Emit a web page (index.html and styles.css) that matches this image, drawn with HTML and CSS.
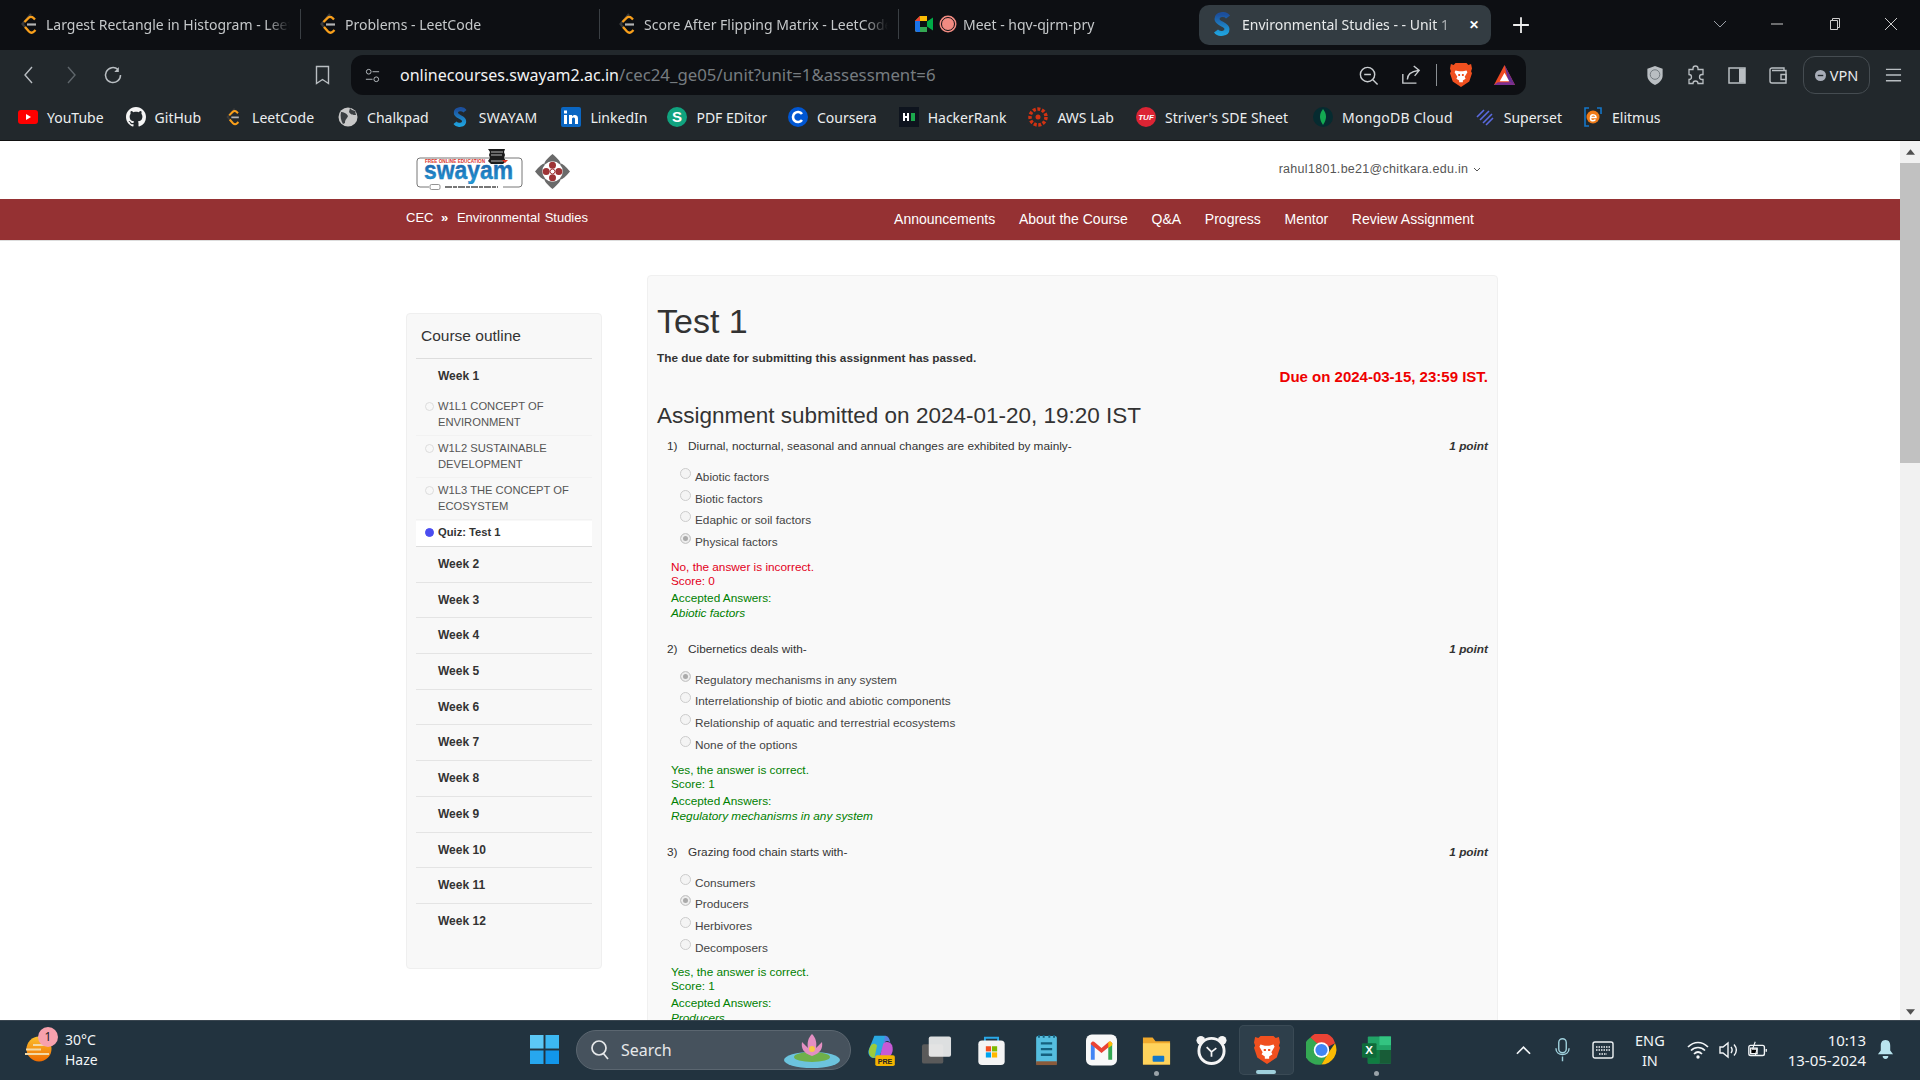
FILE: index.html
```html
<!DOCTYPE html>
<html lang="en">
<head>
<meta charset="utf-8">
<title>Environmental Studies - - Unit 1</title>
<link rel="stylesheet" href="styles.css">
</head>
<body>
<svg class="defs" width="0" height="0">
  <linearGradient id="swg" x1="0" y1="0" x2="0" y2="1"><stop offset="0" stop-color="#1c4f9c"/><stop offset="1" stop-color="#1fa0dc"/></linearGradient>
  <linearGradient id="sung" x1="0" y1="0" x2="0" y2="1"><stop offset="0" stop-color="#fbc02d"/><stop offset="1" stop-color="#ef6c00"/></linearGradient>
  <symbol id="lc" viewBox="0 0 20 24"><path d="M12 2 3.500 12l3 3.500" stroke="#3a3a3a" stroke-width="2.200" fill="none"/><path d="M6 15l4 4.500c1.500 1.500 3.500 1.500 5 0l1.500-1.500" stroke="#f89f1b" stroke-width="2.400" fill="none"/><path d="M5.500 10l4-4c1.500-1.500 3.500-1.500 5 0l1.500 1.500" stroke="#f89f1b" stroke-width="2.400" fill="none"/><path d="M8 12.500h9" stroke="#b3b3b3" stroke-width="2.200"/></symbol>
  <symbol id="sw" viewBox="0 0 16 24"><path d="M14 5C11 1 3 2 3 7c0 5 10 5 10 10 0 5-8 6-11 2" fill="none" stroke="url(#swg)" stroke-width="5"/></symbol>
  <symbol id="brave" viewBox="0 0 24 28"><path d="M6 1h12l2 2 3-1 1 5-1 3 1 2-3 9-9 6-9-6-3-9 1-2-1-3 1-5 3 1z" fill="#f0501f"/><path d="M6 9l4 1h4l4-1 1 2-3 5 1 2-3 2v2h-4v-2l-3-2 1-2-3-5z" fill="#fff"/><path d="M9 13h2v2H9zM13 13h2v2h-2z" fill="#f0501f"/></symbol>
</svg>

<header class="tabstrip">
  <div class="tab"><svg class="fav"><use href="#lc"/></svg><span class="tab-title">Largest Rectangle in Histogram - LeetCode</span></div>
  <div class="tab"><svg class="fav"><use href="#lc"/></svg><span class="tab-title">Problems - LeetCode</span></div>
  <div class="tab"><svg class="fav"><use href="#lc"/></svg><span class="tab-title">Score After Flipping Matrix - LeetCode</span></div>
  <div class="tab tab-meet">
    <svg class="fav" viewBox="0 0 20 20"><path d="M1 7l5-5h7v16H3a2 2 0 0 1-2-2z" fill="#fbbc04"/><path d="M1 7h5v6H1z" fill="#1a73e8"/><path d="M6 2h7v5H6z" fill="#fbbc04"/><path d="M1 7l5-5v5z" fill="#ea4335"/><path d="M1 13h5v5H3a2 2 0 0 1-2-2z" fill="#1a73e8"/><path d="M6 13h7v5H6z" fill="#34a853"/><path d="M6 7h7v6H6z" fill="#0d0f13"/><path d="M13 7.500l6-4v13l-6-4z" fill="#00ac47"/></svg>
    <span class="rec"></span>
    <span class="tab-title">Meet - hqv-qjrm-pry</span>
  </div>
  <div class="tab tab-active"><svg class="fav"><use href="#sw"/></svg><span class="tab-title">Environmental Studies - - Unit 1</span><span class="tab-x">✕</span></div>
  <svg class="newtab" viewBox="0 0 16 16"><path d="M8 1v14M1 8h14" stroke="#eee" stroke-width="1.600"/></svg>
  <div class="winctl">
    <svg viewBox="0 0 14 14"><path d="M1 4l6 6 6-6" stroke="#9aa0a6" fill="none"/></svg>
    <svg viewBox="0 0 14 14"><path d="M1 7h12" stroke="#ccc"/></svg>
    <svg viewBox="0 0 14 14"><path d="M3.500 3.500h7v9h-7zM5.500 3.500v-2h7v9h-2" stroke="#ccc" fill="none"/></svg>
    <svg viewBox="0 0 14 14"><path d="M1 1l12 12M13 1L1 13" stroke="#ccc"/></svg>
  </div>
</header>

<nav class="toolbar">
  <div class="navbtns">
    <svg viewBox="0 0 20 20"><path d="M13 2L6 10l7 8" stroke="#b9bec2" stroke-width="1.400" fill="none"/></svg>
    <svg viewBox="0 0 20 20"><path d="M7 2l7 8-7 8" stroke="#5f666b" stroke-width="1.400" fill="none"/></svg>
    <svg viewBox="0 0 20 20"><path d="M15 4.500A7.500 7.500 0 1 0 17.500 10" stroke="#b9bec2" stroke-width="1.500" fill="none"/><path d="M15.800 2v5h-4.500z" fill="#b9bec2"/></svg>
  </div>
  <svg class="bm" viewBox="0 0 16 20"><path d="M2 1.500h12v17l-6-4-6 4z" stroke="#b9bec2" stroke-width="1.400" fill="none"/></svg>
  <div class="urlbar">
    <svg class="tune" viewBox="0 0 18 18"><circle cx="5" cy="5" r="2.500" stroke="#b9bec2" fill="none"/><path d="M9 5h7M2 13h7" stroke="#b9bec2"/><circle cx="13" cy="13" r="2.500" stroke="#b9bec2" fill="none"/></svg>
    <span class="url"><span class="host">onlinecourses.swayam2.ac.in</span>/cec24_ge05/unit?unit=1&amp;assessment=6</span>
    <svg class="lens" viewBox="0 0 22 22"><circle cx="10" cy="10" r="7.500" stroke="#c9cdd0" stroke-width="1.500" fill="none"/><path d="M6.500 10h7M15.500 15.500l5 5" stroke="#c9cdd0" stroke-width="1.500"/></svg>
    <svg class="share" viewBox="0 0 22 22"><path d="M2 10v10h15M7 16c0-6 4-9 12-10M14 1l6 5-5 6" stroke="#c9cdd0" stroke-width="1.500" fill="none"/></svg>
    <span class="urlsep"></span>
    <svg class="brv"><use href="#brave"/></svg>
    <svg class="tri" viewBox="0 0 24 24"><path d="M12 1l11 21H1z" fill="#ef4a23"/><path d="M12 1l11 21-7-4z" fill="#662d91"/><path d="M1 22l4-3h14l4 3z" fill="#7b2f91"/><path d="M12 9l5 9H7z" fill="#fff"/></svg>
  </div>
  <div class="tools">
    <svg viewBox="0 0 20 22"><path d="M10 1l8 3v7c0 5-4 8-8 10-4-2-8-5-8-10V4z" fill="#b9bec2"/><circle cx="10" cy="10" r="5" stroke="#6f777c" fill="none"/></svg>
    <svg viewBox="0 0 20 20"><path d="M7 3a2.500 2.500 0 0 1 5 0v1h5v5h-1a2.500 2.500 0 0 0 0 5h1v4h-5a2.500 2.500 0 0 0-5 0H3v-4a2.500 2.500 0 0 0 0-5V4h4z" stroke="#b9bec2" stroke-width="1.300" fill="none"/></svg>
    <svg viewBox="0 0 20 20"><path d="M2 2.500h16v15H2z" stroke="#b9bec2" stroke-width="1.500" fill="none"/><path d="M12 3h6v14h-6z" fill="#b9bec2"/></svg>
    <svg viewBox="0 0 20 20"><path d="M16 5V2.500H4A2 2 0 0 0 2 4.500v11a2 2 0 0 0 2 2h14V5H4" stroke="#b9bec2" stroke-width="1.400" fill="none"/><path d="M13 9h5v5h-5z" stroke="#b9bec2" stroke-width="1.400" fill="none"/></svg>
  </div>
  <div class="vpn"><svg class="vpn-dot" viewBox="0 0 12 12"><circle cx="6" cy="6" r="6" fill="#a8adb8"/><path d="M3 6h6" stroke="#22282c" stroke-width="1.500"/></svg>VPN</div>
  <svg class="menu" viewBox="0 0 18 16"><path d="M1 2h16M1 8h16M1 14h16" stroke="#b9bec2" stroke-width="1.500"/></svg>
</nav>

<div class="bookmarks">
  <span class="bk b1"><svg viewBox="0 0 20 20"><rect y="3" width="20" height="14" rx="3" fill="#f00"/><path d="M8 7l5 3-5 3z" fill="#fff"/></svg>YouTube</span>
  <span class="bk b2"><svg viewBox="0 0 16 16"><path fill="#f5f5f5" d="M8 0C3.580 0 0 3.580 0 8c0 3.540 2.290 6.530 5.470 7.590.4.070.55-.17.55-.38 0-.19-.01-.82-.01-1.490-2.010.37-2.530-.49-2.690-.94-.09-.23-.48-.94-.82-1.130-.28-.15-.68-.52-.01-.53.63-.01 1.080.58 1.230.82.72 1.210 1.870.87 2.330.66.07-.52.28-.87.51-1.070-1.780-.2-3.640-.89-3.640-3.950 0-.87.31-1.590.82-2.150-.08-.2-.36-1.020.08-2.120 0 0 .67-.21 2.200.82.64-.18 1.320-.27 2-.27s1.360.09 2 .27c1.530-1.040 2.200-.82 2.200-.82.44 1.100.16 1.920.08 2.120.51.56.82 1.270.82 2.150 0 3.070-1.870 3.750-3.650 3.950.29.25.54.73.54 1.480 0 1.070-.01 1.930-.01 2.200 0 .21.15.46.55.38A8.010 8.010 0 0 0 16 8c0-4.420-3.580-8-8-8z"/></svg>GitHub</span>
  <span class="bk b3"><svg viewBox="0 0 20 24"><use href="#lc"/></svg>LeetCode</span>
  <span class="bk b4"><svg viewBox="0 0 20 20"><circle cx="10" cy="10" r="9.500" fill="#c8c8c8"/><path d="M3 5c3 0 5 1 7 4-1 3-3 3-3 7l-2 1C3 14 2 9 3 5zM12 1c1 2 3 2 5 3l1 4c-3 0-5 0-7-3z" fill="#3b3f42"/></svg>Chalkpad</span>
  <span class="bk b5"><svg viewBox="0 0 16 24"><use href="#sw"/></svg>SWAYAM</span>
  <span class="bk b6"><svg viewBox="0 0 20 20"><rect width="20" height="20" rx="2" fill="#0a66c2"/><path d="M3 8h3v9H3zM3 3.500h3v3H3zM8 8h3v1.500c1-2 6-2.500 6 2V17h-3v-5c0-2-3-2-3 0v5H8z" fill="#fff"/></svg>LinkedIn</span>
  <span class="bk b7"><svg viewBox="0 0 20 20"><circle cx="10" cy="10" r="10" fill="#10a37f"/><text x="10" y="15" class="ico-t" fill="#fff">S</text></svg>PDF EDitor</span>
  <span class="bk b8"><svg viewBox="0 0 20 20"><circle cx="10" cy="10" r="10" fill="#0056d2"/><path d="M14 7a5 5 0 1 0 0 6" stroke="#fff" stroke-width="2.600" fill="none"/></svg>Coursera</span>
  <span class="bk b9"><svg viewBox="0 0 20 20"><rect width="20" height="20" fill="#0e141e"/><path d="M4 6h2v8H4zM8 6h2v8H8zM5 9h4v2H5z" fill="#fff"/><path d="M12 6h4v8h-4z" fill="#1ba94c"/></svg>HackerRank</span>
  <span class="bk b10"><svg viewBox="0 0 20 20"><circle cx="10" cy="10" r="8" stroke="#d13212" stroke-width="3.500" stroke-dasharray="3 1.600" fill="none"/><circle cx="10" cy="10" r="2.500" fill="#d13212"/></svg>AWS Lab</span>
  <span class="bk b11"><svg viewBox="0 0 20 20"><circle cx="10" cy="10" r="10" fill="#dc2434"/><text x="10" y="13" class="ico-s" fill="#fff">TUF</text></svg>Striver's SDE Sheet</span>
  <span class="bk b12"><svg viewBox="0 0 20 20"><circle cx="10" cy="10" r="10" fill="#062b30"/><path d="M10 2c4 5 4 10 0 16-4-6-4-11 0-16z" fill="#13aa52"/></svg>MongoDB Cloud</span>
  <span class="bk b13"><svg viewBox="0 0 20 20"><path d="M2 10l7-7M5 13l9-9M8 16l9-9M11 18l7-7" stroke="#5a6ae0" stroke-width="1.600" fill="none"/></svg>Superset</span>
  <span class="bk b14"><svg viewBox="0 0 20 20"><path d="M6 1H2v18h4M14 1h4v6" stroke="#1576c8" stroke-width="1.600" fill="none"/><circle cx="10" cy="10" r="6.500" fill="#ef7b18"/><path d="M7 10.500h6c0-3-5-4-5.500 0s3 4 5 2" stroke="#fff" stroke-width="1.500" fill="none"/></svg>Elitmus</span>
</div>

<div class="viewport">
  <div class="page">
    <div class="site-head">
      <div class="head-inner">
        <svg class="logo" viewBox="0 0 108 44">
          <rect x="2" y="10" width="105" height="29" rx="3" fill="#fff" stroke="#777"/>
          <text x="10" y="15" class="logo-free" textLength="60" lengthAdjust="spacingAndGlyphs">FREE ONLINE EDUCATION</text>
          <text x="9" y="31" class="logo-main" textLength="89" lengthAdjust="spacingAndGlyphs">swayam</text>
          <path d="M73 1h17l-1 3 1 3-1 3 2 3-3 3H76l-3-3 2-3-1-3 1-3z" fill="#1b1b1b"/>
          <path d="M76 4h12M76 7h11M76 13h12" stroke="#ddd" stroke-width=".8"/>
          <path d="M87 12h6l-3 3z" fill="#d32"/>
          <rect x="14" y="36" width="74" height="6" fill="#fff"/>
          <rect x="15" y="36.500" width="10" height="5" rx="1.500" fill="#fff" stroke="#777" stroke-width=".8"/>
          <path d="M30 39h53" stroke="#777" stroke-width="2" stroke-dasharray="7 1 4 1"/>
        </svg>
        <svg class="emblem" viewBox="0 0 36 36">
          <path d="M18 0C24 5 27 9 26 10C27 9 31 12 36 18C31 24 27 27 26 26C27 27 24 31 18 36C12 31 9 27 10 26C9 27 5 24 0 18C5 12 9 9 10 10C9 9 12 5 18 0Z" fill="#6a6a6a"/>
          <circle cx="18" cy="18" r="10.500" fill="#fff"/>
          <circle cx="18" cy="11.500" r="3.600" fill="#9e3436"/><circle cx="18" cy="24.500" r="3.600" fill="#9e3436"/><circle cx="11.500" cy="18" r="3.600" fill="#9e3436"/><circle cx="24.500" cy="18" r="3.600" fill="#9e3436"/>
          <circle cx="18" cy="18" r="2.500" fill="#fff" stroke="#9e3436"/>
        </svg>
        <div class="user">rahul1801.be21@chitkara.edu.in <svg class="caret" viewBox="0 0 8 6"><path d="M1 1l3 3 3-3" stroke="#555" fill="none"/></svg></div>
      </div>
    </div>
    <div class="redbar">
      <div class="crumbs">CEC <span class="raquo">»</span> <span class="crumb2">Environmental Studies</span></div>
      <div class="menu-links">
        <span>Announcements</span><span>About the Course</span><span>Q&amp;A</span><span>Progress</span><span>Mentor</span><span>Review Assignment</span>
      </div>
    </div>
    <div class="content">
      <aside class="outline">
        <h3 class="outline-title">Course outline</h3>
        <div class="wk wk1">Week 1</div>
        <div class="ls"><span class="dot"></span>W1L1 CONCEPT OF ENVIRONMENT</div>
        <div class="ls"><span class="dot"></span>W1L2 SUSTAINABLE DEVELOPMENT</div>
        <div class="ls"><span class="dot"></span>W1L3 THE CONCEPT OF ECOSYSTEM</div>
        <div class="quiz"><span class="dot dot-on"></span>Quiz: Test 1</div>
        <div class="wk">Week 2</div>
        <div class="wk">Week 3</div>
        <div class="wk">Week 4</div>
        <div class="wk">Week 5</div>
        <div class="wk">Week 6</div>
        <div class="wk">Week 7</div>
        <div class="wk">Week 8</div>
        <div class="wk">Week 9</div>
        <div class="wk">Week 10</div>
        <div class="wk">Week 11</div>
        <div class="wk wk-last">Week 12</div>
      </aside>
      <main class="card">
        <h1 class="title">Test 1</h1>
        <p class="passed">The due date for submitting this assignment has passed.</p>
        <p class="due">Due on 2024-03-15, 23:59 IST.</p>
        <h2 class="submitted">Assignment submitted on 2024-01-20, 19:20 IST</h2>

        <section class="q">
          <div class="q-head"><span class="q-n">1)</span><span class="q-t">Diurnal, nocturnal, seasonal and annual changes are exhibited by mainly-</span><span class="pt">1 point</span></div>
          <div class="opt"><span class="radio"></span>Abiotic factors</div>
          <div class="opt"><span class="radio"></span>Biotic factors</div>
          <div class="opt"><span class="radio"></span>Edaphic or soil factors</div>
          <div class="opt"><span class="radio radio-on"></span>Physical factors</div>
          <div class="fb bad">No, the answer is incorrect.<br>Score: 0</div>
          <div class="acc">Accepted Answers:<br><em>Abiotic factors</em></div>
        </section>

        <section class="q">
          <div class="q-head"><span class="q-n">2)</span><span class="q-t">Cibernetics deals with-</span><span class="pt">1 point</span></div>
          <div class="opt"><span class="radio radio-on"></span>Regulatory mechanisms in any system</div>
          <div class="opt"><span class="radio"></span>Interrelationship of biotic and abiotic components</div>
          <div class="opt"><span class="radio"></span>Relationship of aquatic and terrestrial ecosystems</div>
          <div class="opt"><span class="radio"></span>None of the options</div>
          <div class="fb good">Yes, the answer is correct.<br>Score: 1</div>
          <div class="acc">Accepted Answers:<br><em>Regulatory mechanisms in any system</em></div>
        </section>

        <section class="q">
          <div class="q-head"><span class="q-n">3)</span><span class="q-t">Grazing food chain starts with-</span><span class="pt">1 point</span></div>
          <div class="opt"><span class="radio"></span>Consumers</div>
          <div class="opt"><span class="radio radio-on"></span>Producers</div>
          <div class="opt"><span class="radio"></span>Herbivores</div>
          <div class="opt"><span class="radio"></span>Decomposers</div>
          <div class="fb good">Yes, the answer is correct.<br>Score: 1</div>
          <div class="acc">Accepted Answers:<br><em>Producers</em></div>
        </section>
      </main>
    </div>
  </div>
  <div class="scrollbar">
    <svg class="sb-arrow" viewBox="0 0 10 6"><path d="M5 0l5 6H0z" fill="#505050"/></svg>
    <div class="sb-track"><div class="sb-thumb"></div></div>
    <svg class="sb-arrow" viewBox="0 0 10 6"><path d="M5 6L0 0h10z" fill="#505050"/></svg>
  </div>
</div>

<footer class="taskbar">
  <div class="weather">
    <svg class="sun" viewBox="0 0 30 36"><circle cx="15" cy="17" r="12.500" fill="url(#sung)"/><path d="M9 13h17M2 17.500h15M1 22h24" stroke="#f3d9a6" stroke-width="2"/></svg>
    <span class="badge">1</span>
    <div class="wtxt"><span>30°C</span><span>Haze</span></div>
  </div>
  <div class="center-icons">
    <svg class="win" viewBox="0 0 30 30"><path d="M0 0h14v14H0z" fill="#5cc8f5"/><path d="M16 0h14v14H16z" fill="#3cb8f2"/><path d="M0 16h14v14H0z" fill="#27a7ee"/><path d="M16 16h14v14H16z" fill="#1296ea"/></svg>
    <div class="search">
      <svg class="s-lens" viewBox="0 0 20 22"><circle cx="9" cy="9" r="7" stroke="#e6e8ea" stroke-width="1.700" fill="none"/><path d="M13 14l5 6" stroke="#e6e8ea" stroke-width="1.700"/></svg>
      <span>Search</span>
      <svg class="lotus" viewBox="0 0 60 36"><ellipse cx="30" cy="28" rx="28" ry="8" fill="#6cc3dd"/><ellipse cx="30" cy="25" rx="18" ry="5" fill="#6fb04a"/><path d="M30 2c4 4 5 9 4 14l6-6c1 6-1 11-10 14-9-3-11-8-10-14l6 6c-1-5 0-10 4-14z" fill="#e48fc2"/><circle cx="30" cy="17" r="3" fill="#f6c945"/></svg>
    </div>
    <div class="tb-apps">
      <span class="app"><svg viewBox="0 0 32 36"><path d="M8 2h11c3 0 2 6 0 10l-6 15H7c-5 0-7-6-5-10z" fill="#2aa8e0"/><path d="M3 15c2-5 6-5 8-2l-3 14c-5 0-8-6-5-12z" fill="#9ccc3c"/><path d="M19 2c5 0 6 3 7 8-2-3-6-3-8 1l1-4c1-3 1-5 0-5z" fill="#5b7fe0"/><path d="M18 11c2-3 8-3 10 2 2 6-1 13-5 13h-9z" fill="#c65ad6"/><rect x="9" y="24" width="22" height="12" rx="2" fill="#f4b400"/><text x="20" y="33.500" class="pre">PRE</text></svg></span>
      <span class="app"><svg viewBox="0 0 32 32"><rect x="1" y="10" width="22" height="20" rx="2" fill="#5a5a5a"/><rect x="8" y="2" width="23" height="21" rx="2" fill="#f2f2f2" fill-opacity=".9"/></svg></span>
      <span class="app"><svg viewBox="0 0 30 34"><path d="M8 9V4h14v5" stroke="#29a8e8" stroke-width="2" fill="none"/><rect x="1" y="7" width="28" height="26" rx="4" fill="#f4f4f4"/><rect x="9" y="13" width="5.500" height="5.500" fill="#f25022"/><rect x="15.500" y="13" width="5.500" height="5.500" fill="#7fba00"/><rect x="9" y="19.500" width="5.500" height="5.500" fill="#00a4ef"/><rect x="15.500" y="19.500" width="5.500" height="5.500" fill="#ffb900"/></svg></span>
      <span class="app"><svg viewBox="0 0 26 34"><rect x="2" y="2" width="22" height="30" rx="2" fill="#55bedf"/><rect x="2" y="29" width="22" height="4" fill="#8a5a3a"/><path d="M7 10h12M7 16h12M7 22h12" stroke="#15607e" stroke-width="2.500"/><path d="M5 1v3M10 1v3M16 1v3M21 1v3" stroke="#15607e" stroke-width="2"/></svg></span>
      <span class="app"><svg viewBox="0 0 32 32"><rect width="32" height="32" rx="6" fill="#f8f8f8"/><path d="M5 26V9l4 3v14z" fill="#4285f4"/><path d="M27 26V9l-4 3v14z" fill="#34a853"/><path d="M5 9c1-2 3-2 4-1l7 6 7-6c1-1 3-1 4 1v1l-11 9L5 10z" fill="#ea4335"/><path d="M23 8c1-1 3-1 4 1v2l-4 3z" fill="#fbbc04"/></svg></span>
      <span class="app app-dot"><svg viewBox="0 0 32 32"><path d="M2 3h10l3 4h15v24H2z" fill="#f0a92c"/><path d="M2 9h28v22H2z" fill="#ffd35c"/><rect x="12" y="22" width="12" height="6" rx="1" fill="#1377c9"/></svg></span>
      <span class="app"><svg viewBox="0 0 32 32"><circle cx="5" cy="6" r="4.500" fill="#f4f4f4"/><circle cx="27" cy="6" r="4.500" fill="#f4f4f4"/><circle cx="16" cy="17" r="13" fill="#22333f" stroke="#f4f4f4" stroke-width="3"/><path d="M16 18l-5-5M16 18l5-4M16 18v5" stroke="#f4f4f4" stroke-width="1.800"/></svg></span>
      <span class="app app-active"><svg class="abrv"><use href="#brave"/></svg></span>
      <span class="app"><svg viewBox="0 0 32 32"><path d="M16 16L4.500 3A15 15 0 0 1 30 9z" fill="#ea4335"/><path d="M4.500 3A15.500 15.500 0 0 0 16 31l7-12z" fill="#34a853"/><path d="M30 9a15.500 15.500 0 0 1-14 22l7-12z" fill="#fbbc04"/><circle cx="16" cy="16" r="8" fill="#fff"/><circle cx="16" cy="16" r="6.300" fill="#4285f4"/></svg></span>
      <span class="app app-dot"><svg viewBox="0 0 32 32"><rect x="7" y="2" width="24" height="28" rx="1" fill="#21a366"/><path d="M19 2h12v9H19z" fill="#33c481"/><path d="M7 16h12v14H7z" fill="#107c41"/><path d="M19 16h12v14H19z" fill="#185c37"/><rect x="1" y="9" width="15" height="15" rx="1" fill="#0f6b3a"/><text x="8.500" y="20.500" class="xl">X</text></svg></span>
    </div>
  </div>
  <div class="tray">
    <svg class="t-chev" viewBox="0 0 16 10"><path d="M1 9l7-7 7 7" stroke="#f2f5f7" stroke-width="1.800" fill="none"/></svg>
    <svg class="t-mic" viewBox="0 0 16 26"><rect x="4" y="1" width="8" height="15" rx="4" stroke="#9fd0dc" stroke-width="1.500" fill="none"/><path d="M1 11c0 9 14 9 14 0M8 20v5" stroke="#9fd0dc" stroke-width="1.500" fill="none"/></svg>
    <svg class="t-kb" viewBox="0 0 22 20"><rect x="1" y="2" width="20" height="16" rx="2" stroke="#eef2f4" stroke-width="1.400" fill="none"/><path d="M4 7h14M4 10h14M7 14h8" stroke="#eef2f4" stroke-width="1.600" stroke-dasharray="1.500 1"/></svg>
    <div class="lang"><span>ENG</span><span>IN</span></div>
    <svg class="t-wifi" viewBox="0 0 22 20"><path d="M1 7c6-6 14-6 20 0M4 10.500c4-4 10-4 14 0M7 14c2.500-2.500 5.500-2.500 8 0" stroke="#f2f5f7" stroke-width="1.700" fill="none"/><circle cx="11" cy="17" r="1.700" fill="#f2f5f7"/></svg>
    <svg class="t-vol" viewBox="0 0 22 20"><path d="M2 7h3l5-4v14l-5-4H2z" stroke="#f2f5f7" stroke-width="1.400" fill="none"/><path d="M13 7c1.500 2 1.500 4 0 6M16 4.500c3 3.500 3 7.500 0 11" stroke="#f2f5f7" stroke-width="1.400" fill="none"/></svg>
    <svg class="t-bat" viewBox="0 0 24 20"><rect x="2" y="5" width="17" height="11" rx="2" stroke="#f2f5f7" stroke-width="1.500" fill="none"/><path d="M4 8h7v6H4zM21 9v3" stroke="#f2f5f7" stroke-width="1.500"/><path d="M9 1L6 9h5l-2 7" stroke="#f2f5f7" stroke-width="1.200" fill="none"/></svg>
    <div class="clock"><span>10:13</span><span>13-05-2024</span></div>
    <svg class="t-bell" viewBox="0 0 18 22"><path d="M9 1c4 0 5 3 5 6v5l3 4H1l3-4V7c0-3 1-6 5-6z" fill="#b9e4ee"/><path d="M6 18a3 3 0 0 0 6 0z" fill="#b9e4ee"/></svg>
  </div>
</footer>
</body>
</html>
```

FILE: styles.css
```css
* { box-sizing: border-box; }
html, body { margin: 0; height: 100%; }
body {
  width: 1920px;
  height: 1080px;
  overflow: hidden;
  display: flex;
  flex-direction: column;
  font-family: "Liberation Sans", Arial, sans-serif;
  color: #333;
  background: #fff;
}
.defs { position: absolute; }

/* tab strip */
.tabstrip {
  height: 50px;
  flex: none;
  background: #0d0f13;
  display: flex;
  align-items: flex-start;
  padding: 4px 0 0 2px;
  font-family: "Noto Sans", sans-serif;
  font-size: 14px;
  color: #c5c8ca;
}
.tab {
  width: 299px;
  height: 40px;
  display: flex;
  align-items: center;
  gap: 7px;
  padding: 0 11px 0 17px;
  position: relative;
}
.tab::after {
  content: "";
  position: absolute;
  right: 0;
  top: 5px;
  bottom: 5px;
  width: 1px;
  background: #3a3f44;
}
.fav { width: 20px; height: 24px; flex: none; }
.tab-title {
  flex: 1;
  min-width: 0;
  overflow: hidden;
  white-space: nowrap;
  -webkit-mask-image: linear-gradient(to right, #000 90%, transparent);
  mask-image: linear-gradient(to right, #000 90%, transparent);
}
.tab-meet { width: 300px; gap: 6px; padding-left: 15px; }
.tab-meet .fav { height: 20px; }
.tab-meet::after { display: none; }
.rec {
  width: 14px;
  height: 14px;
  border-radius: 50%;
  background: #f28b82;
  border: 1px solid #0d0f13;
  box-shadow: 0 0 0 1.500px #f28b82;
  margin: 0 2px 0 1px;
  flex: none;
}
.tab-active {
  width: 292px;
  margin-top: 1px;
  padding: 0 12px 2px 13px;
  background: #333c42;
  border-radius: 10px;
  color: #e8eaeb;
  gap: 10px;
}
.tab-active::after { display: none; }
.tab-x { font-size: 12px; font-weight: 700; color: #fff; flex: none; }
.newtab { width: 18px; height: 18px; margin: 12px 0 0 21px; flex: none; }
.winctl { display: flex; gap: 43px; margin: 13px 0 0 auto; padding-right: 22px; }
.winctl svg { width: 14px; height: 14px; display: block; }

/* toolbar */
.toolbar {
  height: 50px;
  flex: none;
  background: #22282c;
  display: flex;
  align-items: flex-start;
  padding: 5px 0 0 19px;
}
.navbtns { display: flex; gap: 22px; height: 40px; align-items: center; }
.navbtns svg { width: 20px; height: 20px; }
.bm { width: 17px; height: 20px; margin: 10px 0 0 191px; flex: none; }
.urlbar {
  width: 1175px;
  height: 40px;
  margin-left: 20px;
  background: #0d0f13;
  border-radius: 12px;
  display: flex;
  align-items: center;
  padding: 0 10px 0 13px;
}
.tune { width: 17px; height: 17px; flex: none; }
.url {
  margin: 0 0 2px 19px;
  font-family: "Noto Sans", sans-serif;
  font-size: 16.800px;
  color: #767c80;
  white-space: nowrap;
}
.host { color: #f2f3f4; font-size: 16px; }
.lens { width: 21px; height: 21px; margin-left: auto; }
.share { width: 20px; height: 20px; margin-left: 22px; }
.urlsep { width: 1px; height: 22px; background: #8a8f93; margin-left: 15px; }
.brv { width: 22px; height: 26px; margin-left: 13px; }
.tri { width: 23px; height: 23px; margin-left: 21px; }
.tools { display: flex; gap: 21px; align-items: center; height: 40px; margin-left: 119px; }
.tools svg { width: 20px; height: 21px; }
.vpn {
  width: 67px;
  height: 38px;
  margin: 1px 0 0 15px;
  border: 1px solid #454c51;
  border-radius: 12px;
  display: flex;
  align-items: center;
  justify-content: center;
  gap: 4px;
  font-family: "Noto Sans", sans-serif;
  font-size: 14.500px;
  color: #e8eaeb;
}
.vpn-dot { width: 11px; height: 11px; }
.menu { width: 17px; height: 16px; margin: 12px 0 0 15px; flex: none; }

/* bookmarks */
.bookmarks {
  height: 41px;
  flex: none;
  background: #22282c;
  border-bottom: 1px solid #111;
  display: flex;
  align-items: center;
  padding: 0 0 6px 18px;
  font-family: "Noto Sans", sans-serif;
  font-size: 14px;
  color: #eceeef;
  white-space: nowrap;
}
.bk { display: flex; align-items: center; gap: 9px; margin-right: 21px; }
.bk svg { width: 20px; height: 20px; flex: none; }
.b1, .b2, .b8, .b9, .b10 { margin-right: 22px; }
.b3 { margin-right: 24px; }
.b5 { margin-right: 24px; letter-spacing: .3px; }
.b6 { margin-right: 20px; }
.b11 { margin-right: 25px; }
.b12 { margin-right: 22px; letter-spacing: .2px; }
.ico-t { font: 700 15px "Liberation Sans", sans-serif; text-anchor: middle; }
.ico-s { font: italic 700 8px "Liberation Sans", sans-serif; text-anchor: middle; }

/* viewport */
.viewport { flex: 1; min-height: 0; display: flex; }
.page { flex: 1; min-width: 0; overflow: hidden; background: #fff; }
.site-head { height: 58px; }
.head-inner { width: 1094px; margin-left: 406px; height: 58px; display: flex; align-items: flex-start; padding: 7px 0 0 9px; }
.logo { width: 108px; height: 44px; flex: none; }
.logo-free { font: 700 5px "Liberation Sans", sans-serif; fill: #d9342b; }
.logo-main { font: 700 25px "Liberation Sans", sans-serif; fill: url(#swg); stroke: #1c6fb0; stroke-width: .4px; }
.emblem { width: 35px; height: 35px; margin: 6px 0 0 12px; flex: none; }
.user { margin: 14px 0 0 auto; padding-right: 19px; font-size: 12.500px; color: #555; letter-spacing: .29px; }
.caret { width: 8px; height: 6px; margin-left: 1px; }

.redbar {
  height: 42px;
  background: #953133;
  color: #fff;
  display: flex;
  align-items: flex-start;
  padding: 0 426px 0 406px;
  width: 1900px;
  border-bottom: 1px solid #ddd;
}
.crumbs { font-size: 13px; margin-top: 11px; word-spacing: 1px; }
.raquo { font-weight: 700; margin: 0 4px 0 3px; }
.crumb2 { font-size: 13px; }
.menu-links { margin-left: auto; display: flex; gap: 23.700px; font-size: 14px; margin-top: 12px; }

.content { width: 1094px; margin-left: 406px; padding-top: 34px; display: flex; align-items: flex-start; gap: 45px; }
.outline {
  width: 196px;
  height: 656px;
  margin-top: 38px;
  flex: none;
  background: #f8f8f8;
  border: 1px solid #efefef;
  border-radius: 4px;
  padding: 0 9px;
}
.outline-title {
  margin: 0;
  height: 45px;
  line-height: 44px;
  font-size: 15.500px;
  font-weight: 400;
  padding-left: 5px;
  border-bottom: 1px solid #ddd;
}
.wk { height: 35.700px; line-height: 34px; font-size: 12px; font-weight: 700; padding-left: 22px; border-bottom: 1px solid #e4e4e4; }
.wk1 { height: 35px; border-bottom: 0; }
.wk-last { border-bottom: 0; }
.ls { position: relative; height: 42px; padding: 4px 0 0 22px; font-size: 11.200px; line-height: 16px; color: #555; border-bottom: 1px solid #f2f2f2; }
.dot { position: absolute; left: 9px; top: 8px; width: 9px; height: 9px; border-radius: 50%; border: 1px solid #ddd; background: #f8f8f8; }
.quiz { position: relative; height: 26px; margin-top: 1px; line-height: 22px; padding-left: 22px; background: #fff; font-size: 11.200px; font-weight: 700; border-bottom: 1px solid #ddd; }
.quiz .dot { top: 7px; }
.dot-on { background: #4b4df0; border-color: #4b4df0; }

.card {
  width: 851px;
  height: 900px;
  flex: none;
  background: #f9f9f9;
  border: 1px solid #f0f0f0;
  border-radius: 4px;
  padding: 0 9px;
}
.title { margin: 24px 0 0; font-size: 34px; font-weight: 400; line-height: 42px; color: #333; }
.passed { margin: 8px 0 0; font-size: 11.800px; font-weight: 700; line-height: 17px; }
.due { margin: 0; text-align: right; font-size: 15px; font-weight: 700; line-height: 20px; color: #e00; }
.submitted { margin: 14px 0 0; font-size: 22.500px; font-weight: 400; line-height: 30px; }
.q { font-size: 11.800px; line-height: 16px; }
.q-head { display: flex; padding: 7px 0 0 10px; height: 38px; }
.q-n { width: 21px; flex: none; }
.q-t { flex: 1; }
.pt { font-style: italic; font-weight: 700; }
.opt { position: relative; height: 21.700px; padding: 0 0 0 38px; line-height: 17px; color: #444; }
.radio { position: absolute; left: 23px; top: -1px; width: 11px; height: 11px; border-radius: 50%; border: 1px solid #ccc; background: #f4f4f4; }
.radio-on { background: #aaa; box-shadow: inset 0 0 0 2px #eee; }
.fb { padding: 4px 0 0 14px; line-height: 14px; }
.bad { color: #e3001b; }
.good { color: #008000; }
.acc { padding: 3px 0 0 14px; margin-bottom: 13px; line-height: 15px; color: #008000; height: 33px; }

/* scrollbar */
.scrollbar { width: 20px; flex: none; background: #f1f1f1; display: flex; flex-direction: column; align-items: center; }
.sb-arrow { width: 9px; height: 6px; margin: 8px 0 5px; flex: none; }
.sb-track { flex: 1; width: 100%; padding-top: 3px; }
.sb-thumb { width: 100%; height: 300px; background: #c1c1c1; }

/* taskbar */
.taskbar {
  height: 60px;
  flex: none;
  background: #22333f;
  border-top: 1px solid #3a4650;
  padding-bottom: 2px;
  display: flex;
  align-items: center;
  position: relative;
  font-family: "Noto Sans", sans-serif;
  color: #f2f5f7;
}
.weather { width: 530px; flex: none; display: flex; align-items: center; padding-left: 24px; position: relative; }
.sun { width: 30px; height: 36px; }
.badge { position: absolute; left: 38px; top: -3px; width: 20px; height: 20px; border-radius: 50%; background: #f7a1ad; color: #222; font-size: 12px; text-align: center; line-height: 20px; }
.wtxt { display: flex; flex-direction: column; margin-left: 11px; font-size: 14px; line-height: 20px; }
.center-icons { display: flex; align-items: center; flex: none; }
.win { width: 29px; height: 29px; flex: none; }
.search {
  width: 275px;
  height: 40px;
  margin-left: 17px;
  border-radius: 20px;
  background: #46525d;
  border: 1px solid #5b6670;
  display: flex;
  align-items: center;
  padding: 0 8px 0 13px;
  font-size: 16px;
  color: #e6e8ea;
}
.s-lens { width: 20px; height: 22px; margin-right: 11px; }
.lotus { width: 60px; height: 36px; margin-left: auto; }
.tb-apps { display: flex; margin-left: 3px; }
.app { width: 55px; height: 50px; display: flex; align-items: center; justify-content: center; position: relative; border-radius: 5px; }
.app svg { width: 31px; height: 32px; }
.app .abrv { width: 26px; height: 32px; }
.app-dot::after { content: ""; position: absolute; bottom: -1px; left: 25px; width: 5px; height: 5px; border-radius: 50%; background: #9aa3a9; }
.app-active { background: #2e3f4b; box-shadow: inset 0 0 0 1px #3a4a55; }
.app-active::after { content: ""; position: absolute; bottom: 1px; left: 17px; width: 20px; height: 4px; border-radius: 2px; background: #9fd0dc; }
.pre { font: 700 8px "Liberation Sans", sans-serif; fill: #222; text-anchor: middle; }
.xl { font: 700 12px "Liberation Sans", sans-serif; fill: #fff; text-anchor: middle; }
.tray { margin-left: auto; display: flex; align-items: center; padding-right: 26px; font-size: 14px; }
.t-chev { width: 15px; height: 10px; margin-right: 24px; }
.t-mic { width: 15px; height: 26px; margin-right: 22px; }
.t-kb { width: 22px; height: 20px; margin-right: 21px; }
.lang { display: flex; flex-direction: column; align-items: center; line-height: 20px; margin-right: 22px; font-size: 14.500px; }
.t-wifi { width: 22px; height: 20px; margin-right: 9px; }
.t-vol { width: 22px; height: 20px; margin-right: 7px; }
.t-bat { width: 22px; height: 20px; margin-right: 19px; }
.clock { display: flex; flex-direction: column; align-items: flex-end; line-height: 20px; margin-right: 11px; font-size: 15px; }
.t-bell { width: 17px; height: 21px; }
```
